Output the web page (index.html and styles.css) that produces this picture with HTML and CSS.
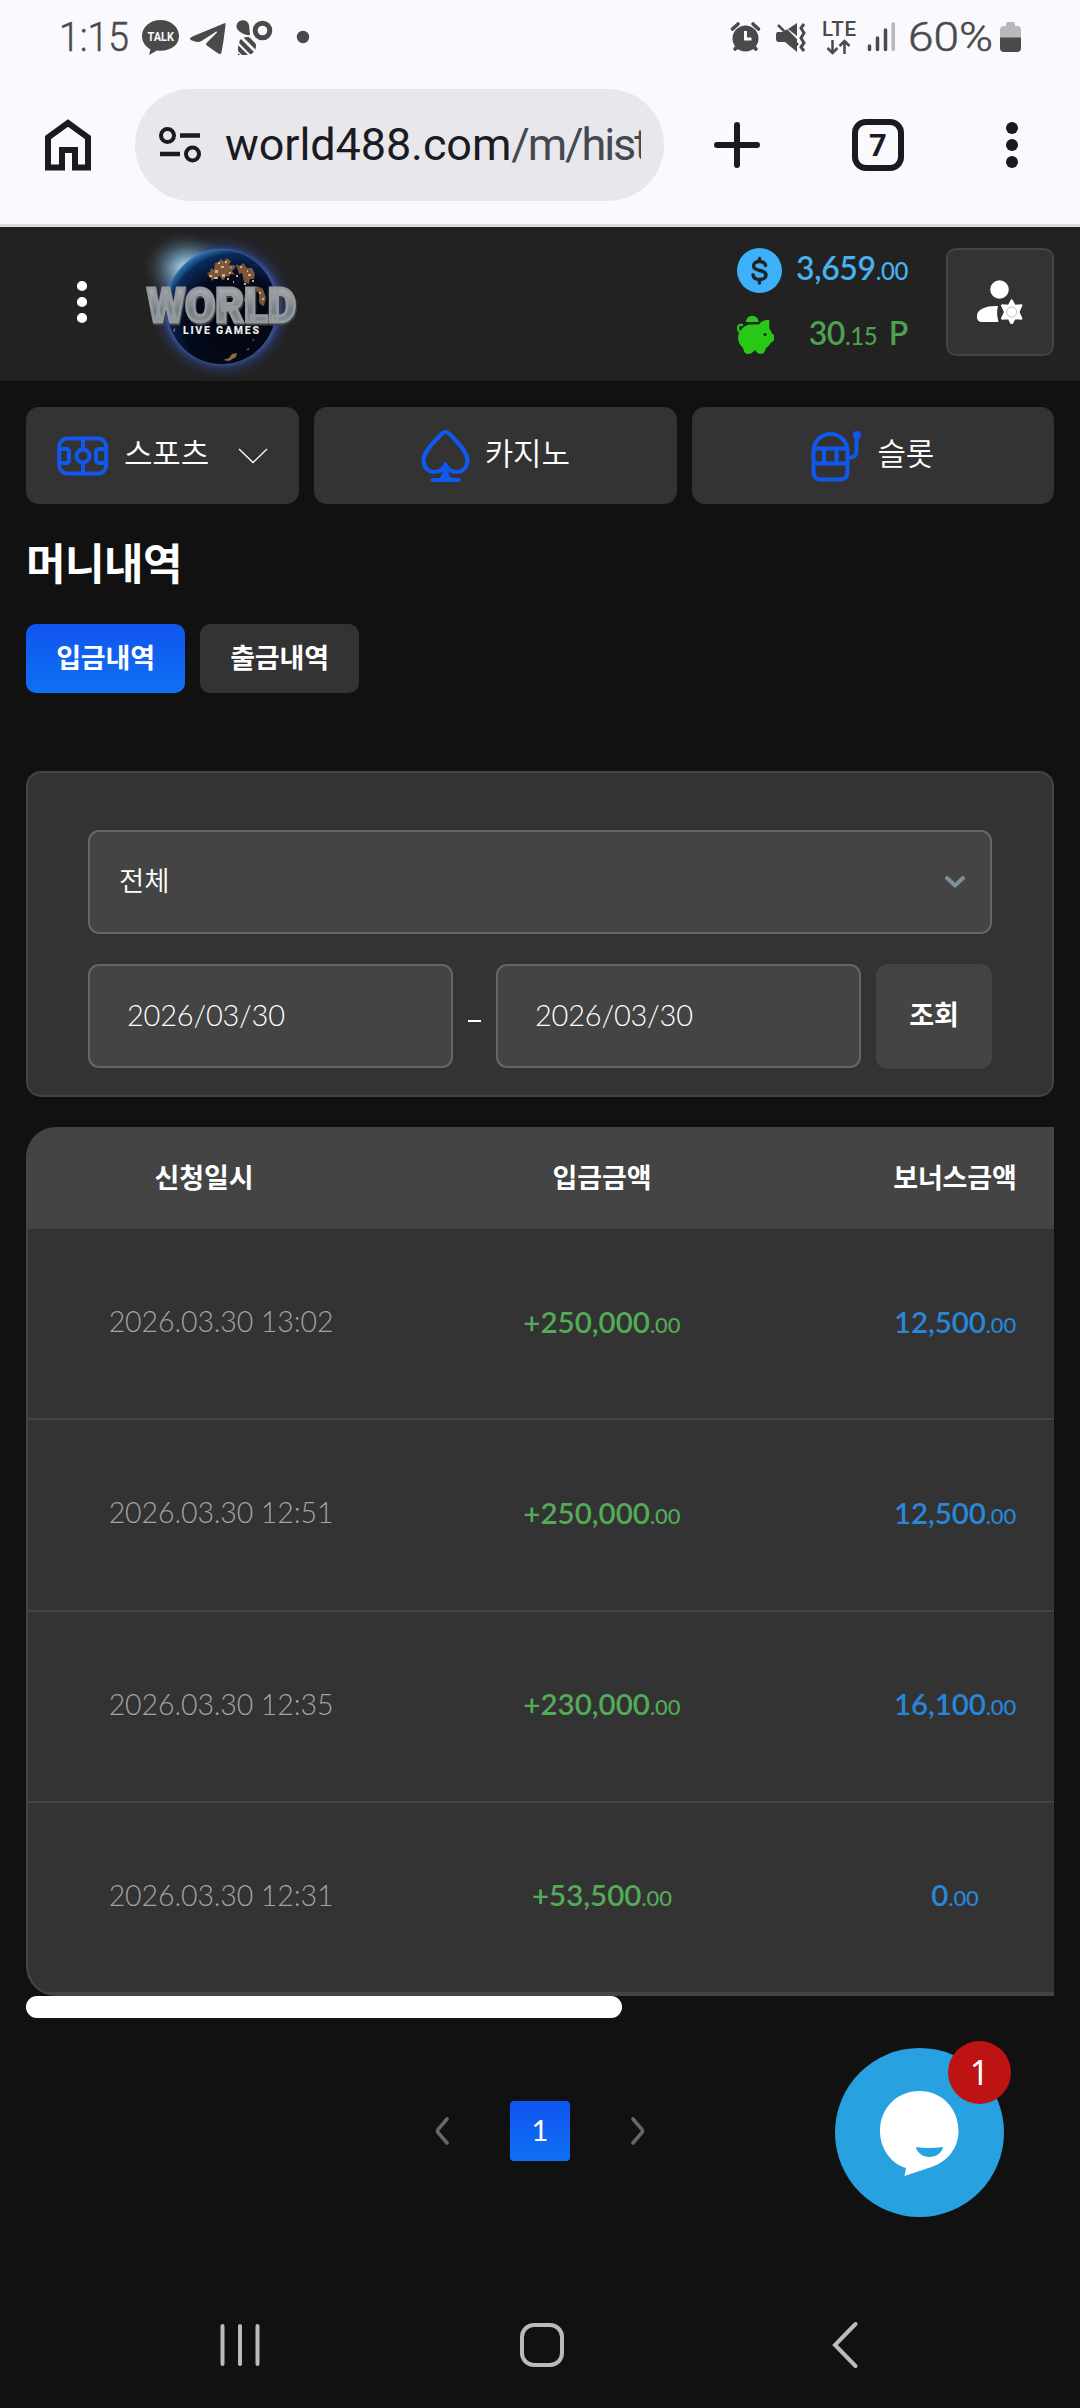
FILE: index.html
```html
<!DOCTYPE html>
<html lang="ko">
<head>
<meta charset="utf-8">
<title>머니내역</title>
<link rel="stylesheet" href="styles.css">
</head>
<body>
<div class="browser">
  <div class="status">
    <svg width="1080" height="74" viewBox="0 0 1080 74" fill="#4a4a4a" font-family="Roboto, sans-serif">
      <text x="59" y="51" font-size="40" font-weight="300" stroke="#4a4a4a" stroke-width=".5" textLength="70" lengthAdjust="spacingAndGlyphs">1:15</text>
      <path d="M160.500 20C150 20 142 27 142 36c0 6 3.500 10.500 8.500 13.500L149 55l8-4.500c13 1.500 22-5 22-14.500 0-9-8-16-18.500-16z"/>
      <text x="147.500" y="40.500" font-size="13.500" font-weight="700" fill="#faf9fe" textLength="26.500" lengthAdjust="spacingAndGlyphs">TALK</text>
      <path d="M225 23c1 0 .5 3-.5 10-1 8-2 14-3 19-.5 3-2 2-4 1l-10-7c-2-1.500-2-2 0-4l9-9c1-1 0-2-1-1l-14 9c-3 1.500-5 1-8 0-5-1.500-4.500-3 0-5z"/>
      <path d="M250 35C247 36 236 32 236.500 26c.5-7 11-8 12.500-1z"/>
      <circle cx="262.500" cy="30.500" r="7.300" fill="none" stroke="#4a4a4a" stroke-width="5"/>
      <clipPath id="bee"><path d="M240 40c7-6 16-2 16 6 0 6-5 9-9 9h-9V47z"/></clipPath>
      <g clip-path="url(#bee)" stroke="#4a4a4a" stroke-width="4.400" fill="none"><path d="M243 34l17 17M238 39l18 18M232 42l18 18M226 44l16 16"/></g>
      <circle cx="303" cy="37" r="6.200"/>
      <circle cx="745.500" cy="38.500" r="13"/>
      <path d="M732.500 29l5.500-5M758.500 29L753 24M735 49l5-4M756 49l-5-4" stroke="#4a4a4a" stroke-width="3.600" stroke-linecap="round"/>
      <path d="M745.500 31v8h6" fill="none" stroke="#faf9fe" stroke-width="3"/>
      <path d="M777 32h7l3-3 10 10v13L785 42h-6q-3 0-3-3v-5zM788 29l9-6v13z"/>
      <path d="M778 25l20 20" stroke="#4a4a4a" stroke-width="2.500"/>
      <path d="M804 24l-3 4 3 5-3 5 3 5-3 4 3 4" fill="none" stroke="#4a4a4a" stroke-width="3"/>
      <text x="822" y="36" font-size="20.500" font-weight="500" textLength="34">LTE</text>
      <path d="M832.500 40v13m-5-5l5 5 5-5M844.500 54V41m-5 5l5-5 5 5" fill="none" stroke="#4a4a4a" stroke-width="2.500"/>
      <path d="M869.500 46v3.500M877.500 38v11.500M885.500 30v19.500" stroke="#4a4a4a" stroke-width="3.500" stroke-linecap="round"/>
      <path d="M893.200 24v25.500" stroke="#b8b8bb" stroke-width="3.500" stroke-linecap="round"/>
      <text x="908" y="51" font-size="40" font-weight="300" stroke="#4a4a4a" stroke-width=".5" textLength="85" lengthAdjust="spacingAndGlyphs">60%</text>
      <path d="M1000 30q0-4 4-4h2v-2q0-2 2-2h5q2 0 2 2v2h2q4 0 4 4v8h-21z" fill="#b9b9bb"/>
      <path d="M1000 37.500h21V48q0 4-4 4h-13q-4 0-4-4z"/>
    </svg>
  </div>
  <div class="toolbar">
    <svg class="home" width="46" height="52" viewBox="0 0 46 52"><path d="M3 18.500L23 4l20 14.500V48.500H30V31H17v17.500H3z" fill="none" stroke="#1b1a20" stroke-width="6"/></svg>
    <div class="url">
      <svg width="42" height="38" viewBox="0 0 42 38" fill="none" stroke="#1b1a20"><circle cx="8.500" cy="9.500" r="6.500" stroke-width="4"/><path d="M21 9.500h20M1 28h20" stroke-width="4.300"/><circle cx="33.500" cy="28" r="6.500" stroke-width="4"/></svg>
      <div class="address"><span>world488.com</span><span class="path">/m/hist</span></div>
    </div>
    <svg class="plus" width="46" height="46" viewBox="0 0 46 46"><path d="M23 3v40M3 23h40" stroke="#1b1a20" stroke-width="6" stroke-linecap="round"/></svg>
    <div class="tabs">7</div>
    <svg class="more" width="12" height="48" viewBox="0 0 12 48" fill="#1b1a20"><circle cx="6" cy="7" r="6"/><circle cx="6" cy="24" r="6"/><circle cx="6" cy="41" r="6"/></svg>
  </div>
</div>

<header class="header">
  <svg class="menu" width="10" height="44" viewBox="0 0 10 44" fill="#fff"><circle cx="5" cy="6" r="5.100"/><circle cx="5" cy="22" r="5.100"/><circle cx="5" cy="38" r="5.100"/></svg>
  <svg class="logo" width="170" height="154" viewBox="137 227 170 154">
    <defs>
      <radialGradient id="glow"><stop offset=".74" stop-color="#3d59ad"/><stop offset=".83" stop-color="#2d3f78" stop-opacity=".5"/><stop offset="1" stop-color="#222" stop-opacity="0"/></radialGradient>
      <radialGradient id="shine"><stop offset="0" stop-color="#c4e6f5"/><stop offset=".45" stop-color="#6f9cb5" stop-opacity=".65"/><stop offset="1" stop-color="#334" stop-opacity="0"/></radialGradient>
      <radialGradient id="globe" cx=".62" cy=".66" r=".74"><stop offset="0" stop-color="#03040b"/><stop offset=".6" stop-color="#040a1d"/><stop offset=".84" stop-color="#0a2b5b"/><stop offset=".94" stop-color="#2c77b0"/><stop offset="1" stop-color="#c4ecff"/></radialGradient>
      <linearGradient id="steel" x1="0" y1="0" x2="0" y2="1"><stop offset="0" stop-color="#b4b8bb"/><stop offset=".3" stop-color="#9fa3a6"/><stop offset=".6" stop-color="#777d81"/><stop offset="1" stop-color="#9ba0a3"/></linearGradient>
    </defs>
    <circle cx="222" cy="307" r="74" fill="url(#glow)"/>
    <ellipse cx="186" cy="268" rx="44" ry="37" fill="url(#shine)"/>
    <ellipse cx="221.500" cy="307" rx="55.500" ry="57.700" fill="url(#globe)" stroke="#4775b5" stroke-opacity=".5"/>
    <g fill="#8d6440"><path d="M207 273l3-1 1-4 3 2 1-7 4-1 1-3 4 2 3-3 4 3-2 4 5 0 2 2-4 4 3 4-5-1-1 3-3-1-2 4-3-1-1-3-5 2-3 3-2-4zM236 264l4 2 3-3 4 5 5 0 3 6-1 5-4 0-1 5-5-2-2-9-3 1zM255 286l4 1 4 2 3 9-2 8-3-1-2-3 0-9-5-3zM245 293l3 4-1 6-3-2z" fill-opacity=".85"/></g>
    <g fill="#dfae76"><path d="M209 275h3v2h-3zM215 270h3v3h-3zM214 277h4v2h-4zM221 266h3v2h-3zM218 262h2v2h-2zM229 272h2v2h-2zM236 275h2v2h-2zM240 266h2v2h-2zM248 274h3v2h-3zM252 280h2v2h-2zM244 283h2v2h-2zM227 278h2v2h-2zM222 274h3v3h-3zM225 261h2v2h-2zM230 267h2v1h-2zM259 292h2v2h-2zM262 298h2v2h-2zM247 270h1v2h-1zM233 281h1v2h-1z"/></g>
    <path d="M223 360l6-2 3-4 5-1-1 4-7 4zM252 340l2-1v2zM246 350l3-2v2zM173 331l2-4v5z" fill="#8e6645"/>
    <g font-family="Roboto, sans-serif" font-weight="900">
      <text class="wordmark" x="147" y="321.500" font-size="49" textLength="149" lengthAdjust="spacingAndGlyphs" fill="url(#steel)" stroke="#94999d" stroke-width="3">WORLD</text>
      <text x="183" y="333.500" font-size="10.500" textLength="76" fill="#ececec">LIVE GAMES</text>
    </g>
  </svg>
  <div class="balances">
    <div class="balance">
      <svg width="45" height="45" viewBox="0 0 45 45"><circle cx="22.500" cy="22.500" r="22.500" fill="#3cb1f9"/><path d="M28.500 17.500c-.5-3-2.500-4-6-4s-6 1.500-6 4.500c0 6 12.500 3 12.500 9 0 3-3 4.500-6.500 4.500s-6-1.500-6.500-4.500M22.500 10.500v3M22.500 31.500V35" fill="none" stroke="#222" stroke-width="3.400" stroke-linecap="round"/></svg>
      <div class="sum cyan">3,659<small>.00</small></div>
    </div>
    <div class="balance">
      <svg width="37" height="39" viewBox="0 0 37 39" fill="#28c916"><path d="M9 7a6.200 6.200 0 0 1 12.500 0z"/><path d="M4 17C2 17 1 15.500 1 13s1.500-3.500 4-3" fill="none" stroke="#28c916" stroke-width="2.300" stroke-linecap="round"/><path d="M4 15c3-4 6-5.500 11-5.500h7c2-3 5-4.500 9-4.500 1 0 1.300.5 1.300 1.500v7c1.200 1.500 2 3 2.500 5 1.500.5 2.200 1 2.200 2v4c0 1-1 1.800-3 3-1 2-3 4-5 5.500l-1.500 4q-1.500 2-4 2t-4-2l-.8-1.500h-1.400L16 37q-2 2-5 2t-4-3l-1-3c-5-4-7-12-2-18z"/><circle cx="28" cy="19.500" r="1.600" fill="#222"/></svg>
      <div class="sum green">30<small>.15</small> P</div>
    </div>
  </div>
  <div class="account">
    <svg width="46" height="44" viewBox="0 0 46 44" fill="#fff"><circle cx="22.500" cy="9.500" r="9.300"/><path d="M21 26c-1.500 5-1 10 .5 16H5q-5 0-5-5v-2c1-6 9-9.500 21-9z"/><path d="M34.700 20.500l3 5.500 6.500-.5-3 6.500 3 6.500-6.500-.5-3 5.500-3-5.500-6.500.5 3-6.500-3-6.500 6.500.5z" stroke="#fff" stroke-width="2.400" stroke-linejoin="round"/><circle cx="34.700" cy="32" r="5" fill="none" stroke="#aaa" stroke-width=".7"/></svg>
  </div>
</header>

<nav class="nav">
  <a class="sports">
    <svg width="52" height="40" viewBox="0 0 52 40" fill="none" stroke="#1158ef" stroke-width="4"><rect x="2.200" y="2.500" width="47" height="35" rx="8"/><path d="M26 3v10M26 27v10M3 13h6q3 0 3 3v8q0 3-3 3H3M48 13h-6q-3 0-3 3v8q0 3 3 3h6"/><circle cx="26" cy="20" r="6.500"/></svg>
    <span>스포츠</span>
    <svg class="arrow" width="30" height="16" viewBox="0 0 30 16"><path d="M1 1l14 13.500L29 1" fill="none" stroke="#fff" stroke-width="1.300"/></svg>
  </a>
  <a>
    <svg width="49" height="54" viewBox="0 0 49 54" fill="none" stroke="#1158ef" stroke-width="4.200" stroke-linejoin="round" stroke-linecap="round"><path d="M24.500 3c-2 0-3.500 1.500-5 3C14 12 2.500 22 2.500 31.500c0 7 5 11.500 11 11.500 5 0 9-3 11-7.500C26.500 40 30.500 43 35.500 43c6 0 11-4.500 11-11.500C46.500 22 35 12 29.500 6c-1.500-1.500-3-3-5-3z"/><path d="M24.500 37c0 7-1 10.500-5 14h10c-4-3.500-5-7-5-14zM11.500 51h26" fill="#1158ef"/></svg>
    <span>카지노</span>
  </a>
  <a>
    <svg width="51" height="52" viewBox="0 0 51 52" fill="none" stroke="#1158ef" stroke-width="4"><path d="M2.500 21a17 17 0 0 1 34 0v21q0 7.500-7.500 7.500H10q-7.500 0-7.500-7.500zM3 18.500h33M3 33.500h33M13 19v14M25.500 19v14M37 27.500h2q6.500 0 6.500-6.500V5"/><circle cx="46" cy="5" r="4" fill="#1158ef" stroke="none"/></svg>
    <span>슬롯</span>
  </a>
</nav>

<main class="content">
  <h1>머니내역</h1>
  <div class="pills"><a class="active">입금내역</a><a>출금내역</a></div>

  <section class="filter">
    <div class="select"><span>전체</span><svg width="20" height="13" viewBox="0 0 20 13"><path d="M2 2l8 7.500L18 2" fill="none" stroke="#78909c" stroke-width="4" stroke-linecap="round" stroke-linejoin="round"/></svg></div>
    <div class="range">
      <div class="date">2026/03/30</div><i class="dash"></i><div class="date">2026/03/30</div><div class="search">조회</div>
    </div>
  </section>

  <div class="table">
    <div class="row head"><div>신청일시</div><div>입금금액</div><div>보너스금액</div></div>
    <div class="row"><div class="when">2026.03.30 13:02</div><div class="plus-amt">+250,000<small>.00</small></div><div class="bonus">12,500<small>.00</small></div></div>
    <div class="row"><div class="when">2026.03.30 12:51</div><div class="plus-amt">+250,000<small>.00</small></div><div class="bonus">12,500<small>.00</small></div></div>
    <div class="row"><div class="when">2026.03.30 12:35</div><div class="plus-amt">+230,000<small>.00</small></div><div class="bonus">16,100<small>.00</small></div></div>
    <div class="row"><div class="when">2026.03.30 12:31</div><div class="plus-amt">+53,500<small>.00</small></div><div class="bonus">0<small>.00</small></div></div>
  </div>
  <div class="thumb"></div>

  <div class="pager">
    <svg width="14" height="28" viewBox="0 0 14 28"><path d="M12 2L3 12.500q-1 1.500 0 3L12 26" fill="none" stroke="#666" stroke-width="3.600" stroke-linecap="round"/></svg>
    <b>1</b>
    <svg width="14" height="28" viewBox="0 0 14 28"><path d="M2 2l9 10.500q1 1.500 0 3L2 26" fill="none" stroke="#666" stroke-width="3.600" stroke-linecap="round"/></svg>
  </div>
</main>

<div class="chat">
  <svg width="169" height="169" viewBox="0 0 169 169"><circle cx="84.500" cy="84.500" r="84.500" fill="#27a1e0"/><path d="M84.500 43C62 43 45 60 45 83c0 17 10 32 26 37l-1.500 8 27-9C114 113 123.500 99 123.500 83c0-23-17-40-39-40z" fill="#fff"/><path d="M81 99q13.500 2 27 0c-1 6-7 10-13.500 10S82 105 81 99z" fill="#27a1e0"/></svg>
  <span class="badge">1</span>
</div>

<footer class="system">
  <svg width="40" height="46" viewBox="0 0 40 46"><path d="M2.500 4v38M20 4v38M37.500 4v38" stroke="#bbb" stroke-width="4" stroke-linecap="round"/></svg>
  <svg width="44" height="46" viewBox="0 0 44 46"><rect x="2" y="3" width="40" height="40" rx="12" fill="none" stroke="#bbb" stroke-width="4"/></svg>
  <svg width="26" height="48" viewBox="0 0 26 48"><path d="M23.500 3L3 24l20.500 21" fill="none" stroke="#bbb" stroke-width="4" stroke-linecap="round"/></svg>
</footer>
</body>
</html>
```
FILE: styles.css
```css
* { box-sizing: border-box; margin: 0; padding: 0; }
body { position: relative; width: 1080px; height: 2408px; display: flex; flex-direction: column; overflow: hidden; background: #111; color: #fff; font-family: Lato, "Noto Sans CJK KR", sans-serif; }
svg { display: block; flex: none; }

.browser { height: 227px; background: #faf9fe; border-bottom: 3px solid #dcdbe3; color: #1b1a20; font-family: Roboto, sans-serif; }
.status { height: 74px; }
.toolbar { height: 142px; display: flex; align-items: center; padding-left: 45px; }
.url { width: 529px; height: 112px; margin-left: 44px; padding-left: 24px; display: flex; align-items: center; border-radius: 56px; background: #e8e7ec; }
.address { width: 416px; margin-left: 24px; overflow: hidden; white-space: nowrap; font-size: 45px; line-height: 60px; letter-spacing: -.1px; }
.path { color: #46484f; letter-spacing: -2.100px; }
.plus { margin-left: 50px; }
.tabs { width: 52px; height: 52px; margin-left: 92px; border: 6px solid #1b1a20; border-radius: 14px; text-align: center; font-size: 31px; font-weight: 700; line-height: 41px; }
.more { margin-left: 102px; }

.header { height: 154px; display: flex; background: #222; }
.menu { margin: 53px 0 0 77px; }
.logo { margin-left: 50px; }
.wordmark { filter: drop-shadow(1px 2px 0 #3d4044); }
.balances { width: 171px; margin: 21px 0 0 430px; }
.balance { height: 66px; display: flex; justify-content: space-between; }
.balance + .balance svg { margin-top: 1px; }
.sum { font-size: 32px; line-height: 40px; font-weight: 600; letter-spacing: -.4px; white-space: nowrap; }
.balance + .balance .sum { margin-top: -1px; }
.sum small { font-size: 24px; font-weight: 500; }
.cyan { color: #49b1ee; }
.green { color: #4ba24f; word-spacing: 4px; }
.account { width: 108px; height: 108px; margin: 21px 0 0 38px; display: flex; align-items: center; justify-content: center; background: #333; border: 2px solid #444; border-radius: 10px; }

.nav { display: flex; gap: 15px; height: 149px; padding: 26px 26px 26px; }
.nav a { flex: 1; height: 97px; display: flex; align-items: center; justify-content: center; gap: 15px; background: #333; border-radius: 13px; font-size: 31px; }
.nav span { margin-top: -9px; font-weight: 350; letter-spacing: -.2px; }
.nav .sports { flex: none; width: 273px; }
.arrow { margin-left: 14px; }

.content { padding: 0 26px; }
h1 { margin-top: 2px; padding-left: 0; font-size: 43px; line-height: 64px; letter-spacing: -.6px; font-weight: 700; }
.pills { display: flex; gap: 15px; margin-top: 28px; }
.pills a { width: 159px; height: 69px; border-radius: 10px; background: #333; text-align: center; font-size: 27px; line-height: 67px; letter-spacing: -.2px; font-weight: 700; }
.pills .active { background: linear-gradient(#1055f0, #0f70f2); }

.filter { height: 326px; margin-top: 78px; padding: 57px 60px 0; background: #333; border: 2px solid #444; border-radius: 15px; }
.select { height: 104px; display: flex; align-items: center; justify-content: space-between; padding: 0 25px 0 29px; border: 2px solid #666; border-radius: 11px; background: #444; font-size: 27.500px; font-weight: 350; }
.select span { margin-top: -7px; }
.range { display: flex; margin-top: 30px; }
.date { width: 365px; height: 104px; padding-left: 37px; border: 2px solid #666; border-radius: 11px; background: #444; font-size: 29px; line-height: 98px; font-weight: 300; letter-spacing: -.2px; }
.dash { width: 13px; height: 2px; margin: 56px 15px 0; background: #fff; }
.search { width: 116px; height: 105px; margin-left: 15px; border-radius: 12px; background: #444; text-align: center; font-size: 27px; line-height: 101px; font-weight: 700; }

.table { height: 869px; margin-top: 30px; overflow: hidden; border: 2px solid #444; border-right: 0; border-radius: 30px 0 0 30px; background: #333; }
/* the last column runs past the right edge of the scroll area */
.row { display: grid; grid-template-columns: 386px 376px 330px; height: 191.250px; align-items: center; border-bottom: 2px solid #444; text-align: center; white-space: nowrap; font-size: 29.500px; padding-bottom: 5px; }
.row:last-child { height: 191px; }
.head { height: 100px; padding-bottom: 5px; background: #444; border: 0; font-size: 27px; letter-spacing: -.1px; font-weight: 700; }
.head > :first-child { margin-left: -34px; }
.when { color: #a3a3a3; font-size: 28.500px; font-weight: 300; letter-spacing: -.1px; }
.plus-amt { color: #55aa58; font-weight: 600; letter-spacing: 0; }
.bonus { color: #2a86d8; font-weight: 600; letter-spacing: -.1px; }
.row small { font-size: 22px; font-weight: 500; }
.thumb { width: 596px; height: 22px; border-radius: 11px; background: #fff; }

.pager { display: flex; align-items: center; justify-content: center; gap: 61px; margin-top: 83px; }
.pager b { width: 60px; height: 60px; border-radius: 4px; background: linear-gradient(#1055f0, #0f70f2); text-align: center; font-size: 29px; line-height: 57px; font-weight: 400; }

.chat { position: absolute; left: 835px; top: 2048px; width: 169px; height: 169px; }
.badge { position: absolute; right: -7px; top: -7px; width: 63px; height: 63px; border-radius: 50%; background: #bd1313; text-align: center; font: 34px/63px "Noto Sans", sans-serif; }

.system { display: flex; align-items: center; margin-top: auto; height: 126px; padding: 0 0 0 220px; }
.system svg:nth-child(2) { margin-left: 260px; }
.system svg:nth-child(3) { margin-left: 268px; }
```
